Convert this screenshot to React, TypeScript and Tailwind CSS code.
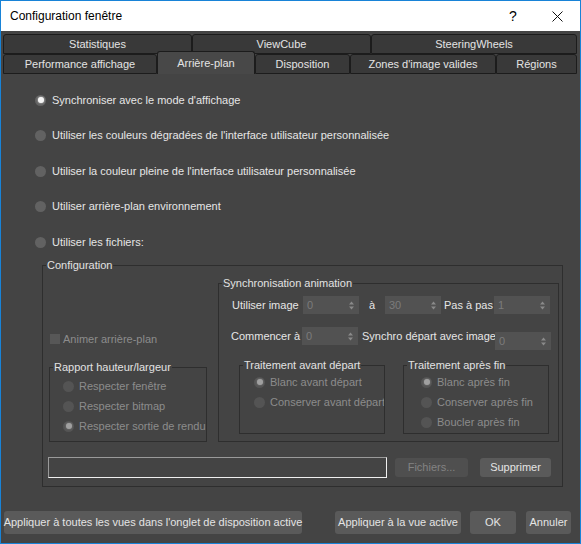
import React from 'react';

const font = 'font-["Liberation_Sans",Arial,sans-serif]';

function Radio({ checked, disabled }: { checked?: boolean; disabled?: boolean }) {
  return (
    <span
      className={`flex h-[11px] w-[11px] shrink-0 items-center justify-center rounded-full ${
        disabled ? 'bg-[#545454]' : 'bg-[#626262]'
      }`}
    >
      {checked && (
        <span
          className={`h-[6px] w-[6px] rounded-full ${
            disabled ? 'bg-[#a0a0a0] shadow-[0_0_2px_#888]' : 'bg-[#f4f4f4] shadow-[0_0_2px_#ddd]'
          }`}
        />
      )}
    </span>
  );
}

function Spinner({ value }: { value: string }) {
  return (
    <div className="flex h-[18px] w-[56px] shrink-0 items-center justify-between bg-[#525252] pl-[4px] pr-[5px] text-[#7c7c7c]">
      <span className="leading-none">{value}</span>
      <svg width="5" height="9" viewBox="0 0 5 9" className="text-[#8a8a8a]">
        <path d="M2.5 0.5 L5 3.5 L0 3.5 Z" fill="currentColor" />
        <path d="M2.5 8.5 L5 5.5 L0 5.5 Z" fill="currentColor" />
      </svg>
    </div>
  );
}

function Group({ title, className, children }: { title: string; className?: string; children?: React.ReactNode }) {
  return (
    <fieldset className={`min-w-0 border border-[#2e2e2e] ${className ?? ''}`}>
      <legend className="ml-[3px] px-[1px] leading-[14px] text-[#e2e2e2]">{title}</legend>
      {children}
    </fieldset>
  );
}

function Tab({ label, width, active }: { label: string; width: string; active?: boolean }) {
  return (
    <div
      className={`flex items-center justify-center rounded-t-[3px] border border-[#1c1c1c] text-[#e4e4e4] ${width} ${
        active ? 'relative z-10 -mt-[2px] h-[23px] border-b-0 bg-[#484848]' : 'h-[20px] bg-[#393939]'
      }`}
    >
      {label}
    </div>
  );
}

function Button({ label, className, disabled }: { label: string; className?: string; disabled?: boolean }) {
  return (
    <div
      className={`flex items-center justify-center rounded-[3px] ${
        disabled ? 'bg-[#4f4f4f] text-[#838383]' : 'bg-[#5a5a5a] text-[#e4e4e4]'
      } ${className ?? ''}`}
    >
      {label}
    </div>
  );
}

export default function App() {
  const mainOptions = [
    'Synchroniser avec le mode d\'affichage',
    'Utiliser les couleurs dégradées de l\'interface utilisateur personnalisée',
    'Utiliser la couleur pleine de l\'interface utilisateur personnalisée',
    'Utiliser arrière-plan environnement',
    'Utiliser les fichiers:',
  ];

  return (
    <div className={`${font} flex h-[544px] w-[581px] flex-col whitespace-nowrap border border-[#1883d7] bg-[#444444] text-[11px]`}>
      {/* title bar */}
      <div className="flex h-[30px] shrink-0 items-center bg-white pl-[9px] text-[12px] text-black">
        <span className="flex-1">Configuration fenêtre</span>
        <span className="w-[20px] text-center text-[14px]">?</span>
        <span className="ml-[24px] mr-[13px] flex w-[20px] justify-center">
          <svg width="11" height="11" viewBox="0 0 11 11">
            <path d="M0.5 0.5 L10.5 10.5 M10.5 0.5 L0.5 10.5" stroke="#111" strokeWidth="1" />
          </svg>
        </span>
      </div>

      {/* tabs */}
      <div className="ml-[2px] mt-[3px] flex flex-col">
        <div className="flex">
          <Tab label="Statistiques" width="w-[189px]" />
          <Tab label="ViewCube" width="w-[179px]" />
          <Tab label="SteeringWheels" width="w-[206px]" />
        </div>
        <div className="-mt-[1px] flex items-end">
          <Tab label="Performance affichage" width="w-[154px]" />
          <Tab label="Arrière-plan" width="w-[98px]" active />
          <Tab label="Disposition" width="w-[95px]" />
          <Tab label="Zones d'image valides" width="w-[146px]" />
          <Tab label="Régions" width="w-[81px]" />
        </div>
      </div>

      {/* main options */}
      <div className="ml-[34px] mt-[16px] flex flex-col gap-[15.5px]">
        {mainOptions.map((o, i) => (
          <div key={o} className="flex h-[20px] items-center text-[#e6e6e6]">
            <Radio checked={i === 0} />
            <span className="ml-[6px]">{o}</span>
          </div>
        ))}
      </div>

      {/* configuration */}
      <Group title="Configuration" className="ml-[41px] mt-[6px] w-[521px] pb-[8px]">
        <div className="flex items-end">
          <div className="ml-[6px] flex w-[158px] flex-col">
            <div className="mb-[14px] flex h-[14px] items-center text-[#8c8c8c]">
              <span className="ml-[1px] h-[10px] w-[10px] bg-[#575757]" />
              <span className="ml-[3px]">Animer arrière-plan</span>
            </div>
            <Group title="Rapport hauteur/largeur" className="pb-[5px] pt-[2px]">
              {['Respecter fenêtre', 'Respecter bitmap', 'Respecter sortie de rendu'].map((o, i) => (
                <div key={o} className="flex h-[20px] items-center pl-[13px] text-[#8c8c8c]">
                  <Radio disabled checked={i === 2} />
                  <span className="ml-[5px]">{o}</span>
                </div>
              ))}
            </Group>
          </div>

          <Group title="Synchronisation animation" className="ml-[11px] mt-[4px] w-[341px] pb-[7px]">
            <div className="mt-[6px] flex h-[18px] items-center text-[#e6e6e6]">
              <span className="ml-[13px] w-[71px]">Utiliser image</span>
              <Spinner value="0" />
              <span className="w-[26px] text-center">à</span>
              <Spinner value="30" />
              <span className="w-[53px] pl-[3px]">Pas à pas</span>
              <Spinner value="1" />
            </div>
            <div className="mt-[13px] flex h-[18px] items-start text-[#e6e6e6]">
              <span className="ml-[12px] flex h-[18px] w-[71px] items-center">Commencer à</span>
              <Spinner value="0" />
              <span className="flex h-[18px] w-[137px] items-center pl-[4px]">Synchro départ avec image</span>
              <div className="mt-[5px]">
                <Spinner value="0" />
              </div>
            </div>
            <div className="ml-[20px] mt-[13px] flex gap-[18px]">
              <Group title="Traitement avant départ" className="h-[76px] w-[146px]">
                {['Blanc avant départ', 'Conserver avant départ'].map((o, i) => (
                  <div key={o} className="flex h-[20px] items-center overflow-hidden pl-[14px] pr-[4px] text-[#8c8c8c]">
                    <Radio disabled checked={i === 0} />
                    <span className="ml-[5px]">{o}</span>
                  </div>
                ))}
              </Group>
              <Group title="Traitement après fin" className="h-[76px] w-[146px]">
                {['Blanc après fin', 'Conserver après fin', 'Boucler après fin'].map((o, i) => (
                  <div key={o} className="flex h-[20px] items-center pl-[17px] text-[#8c8c8c]">
                    <Radio disabled checked={i === 0} />
                    <span className="ml-[5px]">{o}</span>
                  </div>
                ))}
              </Group>
            </div>
          </Group>
        </div>

        <div className="mt-[15px] flex items-center">
          <div className="ml-[5px] h-[21px] w-[339px] border border-[#9a9a9a] border-b-[#f0f0f0] border-r-[#f0f0f0] bg-[#444444]" />
          <Button label="Fichiers..." disabled className="ml-[8px] h-[19px] w-[73px]" />
          <Button label="Supprimer" className="ml-[12px] h-[19px] w-[71px]" />
        </div>
      </Group>

      {/* bottom buttons */}
      <div className="mt-[24px] flex items-center pl-[3px]">
        <Button label="Appliquer à toutes les vues dans l'onglet de disposition active" className="h-[23px] w-[298px]" />
        <Button label="Appliquer à la vue active" className="ml-[33px] h-[23px] w-[126px]" />
        <Button label="OK" className="ml-[9px] h-[23px] w-[46px]" />
        <Button label="Annuler" className="ml-[10px] h-[23px] w-[45px]" />
      </div>
    </div>
  );
}
